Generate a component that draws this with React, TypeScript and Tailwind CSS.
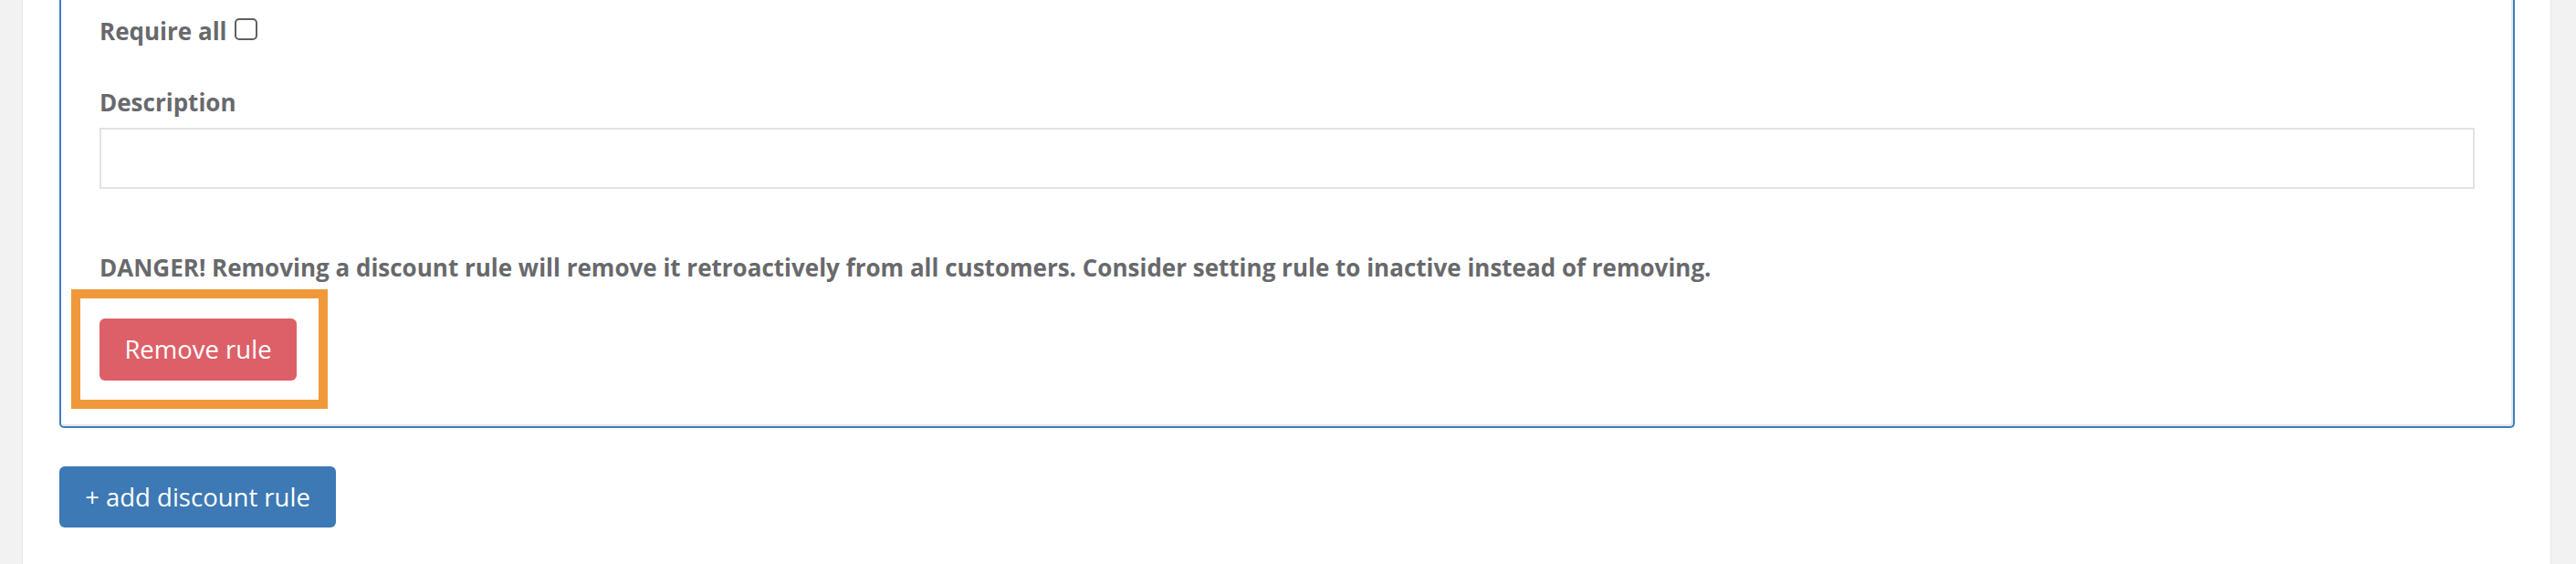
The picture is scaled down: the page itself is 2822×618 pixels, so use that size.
import React from "react";

export default function App() {
  return (
    <div
      className="flex h-[618px] w-[2822px] overflow-hidden bg-[#f2f2f2]"
      style={{ fontFamily: '"Open Sans", "Noto Sans", sans-serif' }}
    >
      <div className="w-[25px] shrink-0 border-r border-[#e6e6e6] bg-[#f2f2f2]" />
      <div className="flex-1 bg-white pl-[40px] pr-[39px]">
        <div className="rounded-b-[5px] border-x-2 border-b-2 border-[#3d7ebf] px-[42px] pb-[50px] shadow-[inset_-2px_-2px_0_#e6e6e6]">
          <div className="flex items-start pt-[15px] text-[26px] font-bold leading-[38px] text-[#68696c]">
            <span>Require all</span>
            <span className="ml-[8px] mt-[5px] inline-block h-[24px] w-[25px] rounded-[5px] border-2 border-[#5f6063] bg-white" />
          </div>
          <div className="mt-[40px] text-[26px] font-bold leading-[38px] text-[#68696c]">Description</div>
          <div className="mt-[9px] h-[67px] w-full border-2 border-[#e3e3e3] bg-white" />
          <div className="mt-[67px] text-[26px] font-bold leading-[38px] text-[#68696c]">
            DANGER! Removing a discount rule will remove it retroactively from all customers. Consider setting rule to inactive instead of removing.
          </div>
          <div className="relative mt-[37px] w-[216px]">
            <div className="flex h-[68px] w-[216px] items-center justify-center rounded-[6px] bg-[#dd6068] text-[27.5px] text-white">
              Remove rule
            </div>
            <div className="pointer-events-none absolute left-[-31px] top-[-32px] h-[131px] w-[281px] border-[10px] border-[#f0993a]" />
          </div>
        </div>
        <div className="mt-[42px] flex h-[67px] w-[303px] items-center justify-center rounded-[6px] bg-[#3d79b4] text-[27.5px] text-white">
          + add discount rule
        </div>
      </div>
      <div className="w-[28px] shrink-0 border-l border-[#e6e6e6] bg-[#f2f2f2]" />
    </div>
  );
}
